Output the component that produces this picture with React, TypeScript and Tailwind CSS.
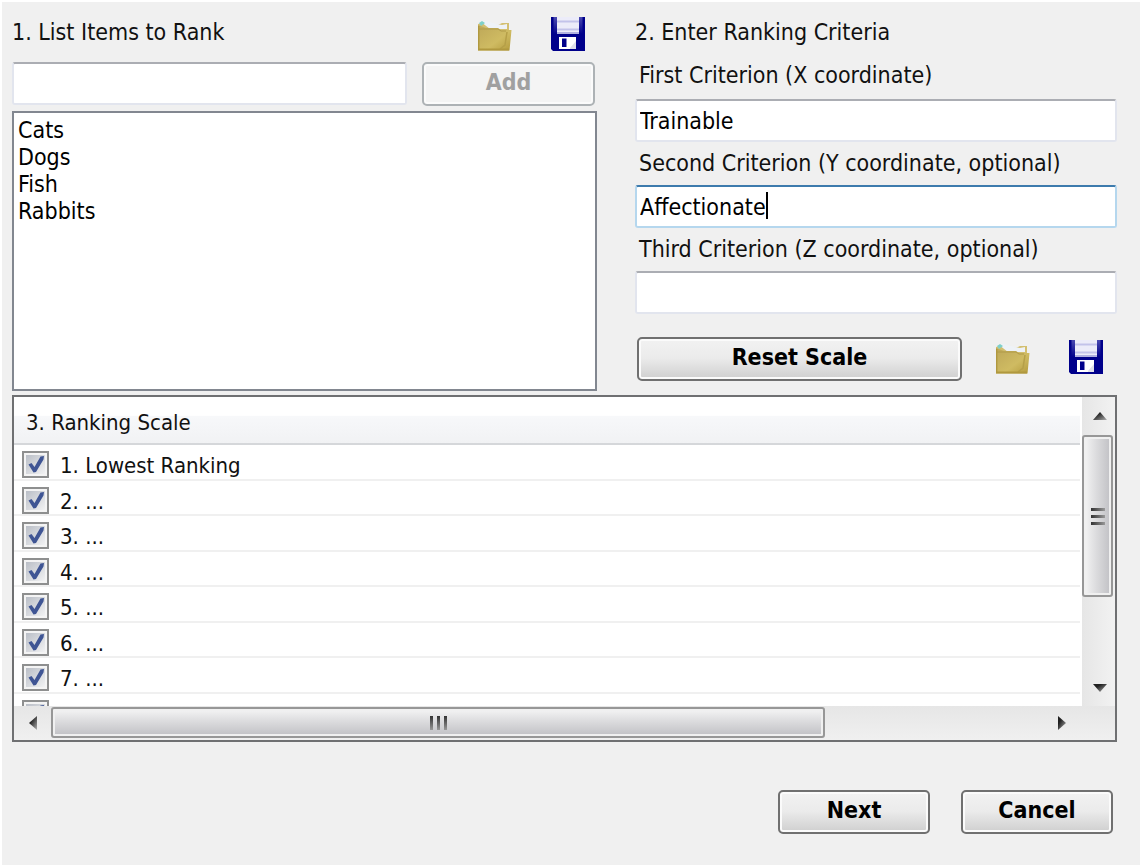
import React from "react";

const items = ["Cats", "Dogs", "Fish", "Rabbits"];
const scale = ["1. Lowest Ranking", "2. ...", "3. ...", "4. ...", "5. ...", "6. ...", "7. ..."];

const fieldClass =
  "block h-[43px] w-full min-w-0 rounded-[3px] border-2 border-[#e2e5ee] border-t-[#abadb3] bg-white px-[3px] text-black outline-none";
const pushClass =
  "h-[44px] rounded-[5px] border-2 border-[#707070] bg-linear-to-b from-[#f2f2f2] from-0% via-[#ebebeb] via-48% to-[#cfcfcf] pb-1 font-bold text-black shadow-[inset_0_0_0_2px_#fbfbfb]";

function FolderIcon() {
  return (
    <svg width="34" height="30" viewBox="0 0 34 30" aria-hidden="true">
      <defs>
        <linearGradient id="folderFront" x1="0" y1="0" x2="1" y2="1">
          <stop offset="0" stopColor="#bda758" />
          <stop offset="0.6" stopColor="#cfbb62" />
          <stop offset="1" stopColor="#b39a3c" />
        </linearGradient>
      </defs>
      <path d="M0 3 L4 2 L20 4 L24 2 H31 V10 H0Z" fill="#d3bf70" />
      <path d="M3 1 L8 0 L18 3 L24 4 L29 3 L29 8 L12 8Z" fill="#eef2f7" />
      <path d="M1 2 L4 0 L7 2 L3 5Z" fill="#7fd0c8" />
      <path d="M0 4 L8 7 H20 L23 9 H33.500 L31.500 29.500 H0Z" fill="url(#folderFront)" />
      <path d="M1 8 L9 8 H20 L23 10 H28" fill="none" stroke="#b09a48" strokeWidth="1" />
      <path d="M29 11 L27 24 L22 28" fill="none" stroke="#b59f48" strokeWidth="1.500" />
      <path d="M0 28.500 H31" stroke="#b0983f" strokeWidth="2" />
      <path d="M0.700 5 V29" stroke="#b0983f" strokeWidth="1.400" />
    </svg>
  );
}

function DiskIcon() {
  return (
    <svg width="34" height="34" viewBox="0 0 34 34" aria-hidden="true">
      <defs>
        <linearGradient id="diskEdge" x1="0" y1="0" x2="0" y2="1">
          <stop offset="0" stopColor="#4a4ab0" />
          <stop offset="1" stopColor="#00008b" />
        </linearGradient>
      </defs>
      <path d="M0 0 H34 V34 H2 L0 32Z" fill="#00008b" />
      <path d="M2.500 0 H6 V17 H2.500Z M28 0 H31.500 V17 H28Z" fill="url(#diskEdge)" />
      <path d="M6 0 H28 V17 H6Z" fill="#ececf9" />
      <path d="M6 4.500 H28 M6 12.500 H28" stroke="#c3c3ea" strokeWidth="2" />
      <path d="M6 16 H28" stroke="#9c9cd6" strokeWidth="1.500" />
      <path d="M8 20 H25 V32 H8Z" fill="#fff" />
      <path d="M11 21.500 H15.500 V30 H11Z" fill="#00008b" />
      <path d="M19 31 L25 24 V32 H19Z" fill="#e0e0ea" />
    </svg>
  );
}

function FileButtons({ what }: { what: string }) {
  return (
    <div className="flex items-end gap-[39px]">
      <button type="button" aria-label={"Open " + what}>
        <FolderIcon />
      </button>
      <button type="button" aria-label={"Save " + what}>
        <DiskIcon />
      </button>
    </div>
  );
}

function Arrow({ dir }: { dir: "up" | "down" | "left" | "right" }) {
  const shapes = {
    up: "M0 11 L7 3 L14 11Z",
    down: "M0 3 L14 3 L7 11Z",
    left: "M11 0 L3 7 L11 14Z",
    right: "M3 0 L11 7 L3 14Z",
  };
  return (
    <svg width="14" height="14" viewBox="0 0 14 14" aria-hidden="true">
      <defs>
        <linearGradient id="arrowFill" x1="0" y1="0" x2="1" y2="1">
          <stop offset="0.3" stopColor="#202020" />
          <stop offset="1" stopColor="#b0b0b0" />
        </linearGradient>
      </defs>
      <path d={shapes[dir]} fill="url(#arrowFill)" />
    </svg>
  );
}

function RankBox({ label }: { label?: string }) {
  return (
    <label className="flex items-start gap-[11px] border-b-2 border-[#f0f0f0] pt-[6px] pl-2">
      <span className="grid h-[27px] w-[27px] shrink-0">
        <input
          type="checkbox"
          defaultChecked
          aria-label={label ? undefined : "Next rank"}
          className="peer col-start-1 row-start-1 h-[27px] w-[27px] appearance-none border-2 border-[#8e8f8f] bg-linear-to-br from-[#b4b9c2] to-[#f8f8f8] shadow-[inset_0_0_0_2px_#f4f4f4]"
        />
        <svg
          className="pointer-events-none invisible col-start-1 row-start-1 peer-checked:visible"
          width="27"
          height="27"
          viewBox="0 0 27 27"
          aria-hidden="true"
        >
          <path d="M6.500 13.500 L9.500 12 L12.500 16 L18.500 5.500 L22 5 L21.500 8.500 L14 21 L11.500 21.500Z" fill="#3f5594" />
        </svg>
      </span>
      {label && <span className="leading-[30px]">{label}</span>}
    </label>
  );
}

export default function App() {
  return (
    <main className="min-h-screen border-2 border-white bg-[#f0f0f0] pr-[23px] pl-[10px] font-['DejaVu_Sans_Condensed','DejaVu_Sans',sans-serif] text-[23px] leading-[27px] text-[#111]">
      <div className="grid grid-cols-[585fr_482fr] gap-x-[38px]">
        <section className="flex flex-col">
          <div className="flex h-[60px] items-start justify-between pt-[15px] pr-3">
            <h2 className="pt-[2px]">1. List Items to Rank</h2>
            <FileButtons what="items" />
          </div>
          <div className="flex gap-[15px] pr-[2px]">
            <input aria-label="Item to add" className={fieldClass} />
            <button
              type="button"
              disabled
              className="h-[44px] w-[173px] shrink-0 rounded-[5px] border-2 border-[#adb2b5] bg-[#f4f4f4] pb-1 font-bold text-[#a0a0a0] shadow-[inset_0_0_0_2px_#fbfbfb]"
            >
              Add
            </button>
          </div>
          <ul className="mt-[5px] flex-1 border-2 border-[#828790] bg-white px-1 pt-1 text-black">
            {items.map((item) => (
              <li key={item}>{item}</li>
            ))}
          </ul>
        </section>

        <section className="flex flex-col pt-[17px]">
          <h2>2. Enter Ranking Criteria</h2>
          <label htmlFor="first" className="mt-4 mb-[10px] pl-1">
            First Criterion (X coordinate)
          </label>
          <input id="first" defaultValue="Trainable" className={fieldClass} />
          <label htmlFor="second" className="mt-2 mb-2 pl-1">
            Second Criterion (Y coordinate, optional)
          </label>
          <div className="relative">
            <input
              id="second"
              defaultValue="Affectionate"
              className="block h-[43px] w-full min-w-0 rounded-[3px] border-2 border-[#b5d7ee] border-t-[#3d7bad] bg-white px-[3px] text-black outline-none"
            />
            <span className="absolute top-[7px] left-[131px] h-[27px] w-[2px] bg-black" />
          </div>
          <label htmlFor="third" className="mt-2 mb-2 pl-1">
            Third Criterion (Z coordinate, optional)
          </label>
          <input id="third" className={fieldClass} />
          <div className="mt-[23px] mb-[10px] flex items-start justify-between pr-[14px] pl-[2px]">
            <button type="button" className={pushClass + " w-[325px]"}>
              Reset Scale
            </button>
            <div className="pt-[3px]">
              <FileButtons what="scale" />
            </div>
          </div>
        </section>
      </div>

      <section className="mt-1 border-2 border-[#6f7072] bg-[#f0f0f0] text-[22px]">
        <div className="flex">
          <div className="min-w-0 flex-1 bg-white pr-[2px]">
            <h2 className="h-[48px] border-b-2 border-[#d5d7da] bg-linear-to-b from-white from-40% via-[#f7f8fa] via-42% to-[#f1f2f4] pt-3 pl-3">
              3. Ranking Scale
            </h2>
            <div className="h-[261px] overflow-hidden">
              <div className="grid h-[284px] auto-rows-fr">
                {scale.map((label) => (
                  <RankBox key={label} label={label} />
                ))}
                <RankBox />
              </div>
            </div>
          </div>
          <div className="flex w-[33px] flex-col bg-linear-to-r from-[#e6e6e6] to-[#f2f2f2]">
            <button type="button" aria-label="Scroll up" className="flex h-[38px] items-center justify-center pl-[2px]">
              <Arrow dir="up" />
            </button>
            <div className="mr-[2px] flex h-[162px] flex-col items-center justify-center gap-1 rounded-[3px] border-2 border-[#979797] bg-linear-to-r from-[#f5f5f5] via-[#dcdcde] via-45% to-[#c0c0c4] shadow-[inset_0_0_0_2px_#f0f0f0]">
              <span className="h-[3px] w-[14px] bg-linear-to-r from-[#333] to-[#999]" />
              <span className="h-[3px] w-[14px] bg-linear-to-r from-[#333] to-[#999]" />
              <span className="h-[3px] w-[14px] bg-linear-to-r from-[#333] to-[#999]" />
            </div>
            <div className="flex-1" />
            <button type="button" aria-label="Scroll down" className="flex h-[36px] items-center justify-center pl-[2px]">
              <Arrow dir="down" />
            </button>
          </div>
        </div>
        <div className="flex h-[34px] bg-linear-to-b from-[#e6e6e6] to-[#f0f0f0] pr-[35px]">
          <button type="button" aria-label="Scroll left" className="flex w-[37px] items-center justify-center">
            <Arrow dir="left" />
          </button>
          <div className="mt-[1px] mb-[2px] flex flex-[772] items-center justify-center gap-1 rounded-[3px] border-2 border-[#979797] bg-linear-to-b from-[#f5f5f5] via-[#dcdcde] via-45% to-[#c0c0c4] shadow-[inset_0_0_0_2px_#f0f0f0]">
            <span className="h-[14px] w-[3px] bg-linear-to-b from-[#333] to-[#999]" />
            <span className="h-[14px] w-[3px] bg-linear-to-b from-[#333] to-[#999]" />
            <span className="h-[14px] w-[3px] bg-linear-to-b from-[#333] to-[#999]" />
          </div>
          <div className="flex-[219]" />
          <button type="button" aria-label="Scroll right" className="flex w-[36px] items-center justify-center">
            <Arrow dir="right" />
          </button>
        </div>
      </section>

      <div className="mt-12 mb-7 flex justify-end gap-[31px] pr-1">
        <button type="button" className={pushClass + " w-[152px]"}>
          Next
        </button>
        <button type="button" className={pushClass + " w-[152px]"}>
          Cancel
        </button>
      </div>
    </main>
  );
}
